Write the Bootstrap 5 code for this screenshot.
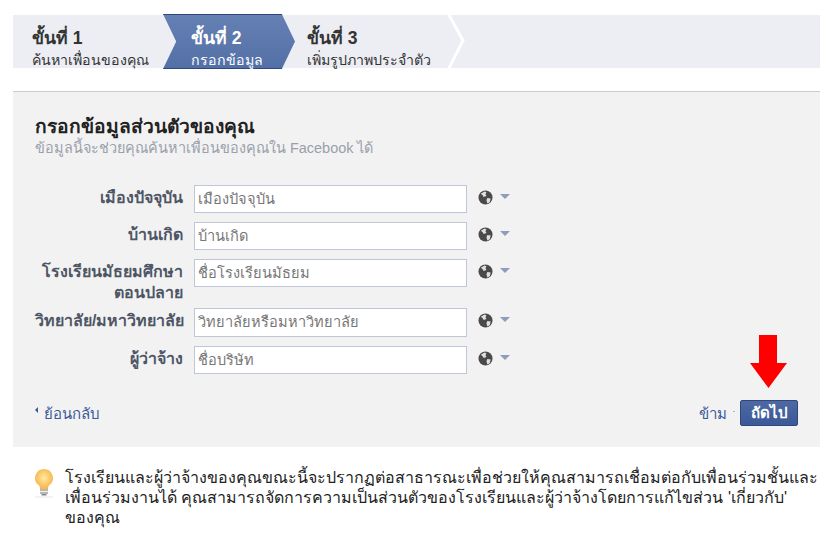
<!DOCTYPE html>
<html lang="th"><head><meta charset="utf-8">
<link href="https://cdn.jsdelivr.net/npm/bootstrap@5.3.0/dist/css/bootstrap.min.css" rel="stylesheet">
<style>
body{background:#fff;font-family:"Liberation Sans",Tahoma,sans-serif;font-size:14px;color:#333;width:835px;height:536px;overflow:hidden}
.wrap{margin:0 15px 0 13px;padding-top:15px}
.steps{height:53px;background:#eceef4}
.stp{height:53px;line-height:1}
.s-title{font-size:17.5px;font-weight:700;color:#333;line-height:20px;margin-top:13px}
.s-sub{font-size:14.2px;color:#333;line-height:20px;margin-top:2px;white-space:nowrap}
.s1{width:150px;padding-left:19px}
.s2{width:132px;height:55px;margin-top:-1px;background:linear-gradient(#6580b3,#5370a6);padding-left:28px;clip-path:polygon(0 0,90% 0,100% 50%,90% 100%,0 100%,10% 50%);box-shadow:inset 0 1px 0 #2f477a,inset 0 -1px 0 #2f477a}
.s2 .s-title{margin-top:14px;color:#fff}
.s2 .s-sub{color:#fff}
.s3{width:153px;padding-left:12px}
.s-end{display:block;flex:none}
.panel{margin-top:23px;background:#f2f2f2;border-top:1px solid #ccc;height:356px;padding:24px 22px 0}
.p-head{font-size:19.2px;font-weight:700;color:#222;line-height:22px}
.p-sub{font-size:14.45px;color:#9aa0ac;line-height:20px;margin-bottom:27px}
.f-row{display:flex;margin-bottom:9px}
.f-row.tall{margin-bottom:5px}
.f-row.big .f-in{height:29px}
.f-lab{width:148px;text-align:right;font-weight:700;color:#4e5665;font-size:16px;line-height:21px;padding-top:2px;flex:none;white-space:nowrap}
.f-in{margin-left:11px;width:273px;height:28px;border:1px solid #bdc7d8;background:#fff;padding:0 3px;font-size:14.6px;color:#777;line-height:26px;flex:none;border-radius:0}
.f-pr{margin-left:11px;display:flex;align-items:flex-start;gap:7px;padding-top:5px}
.tri{width:0;height:0;border:5.5px solid transparent;border-top:5px solid #8d9dbd;border-bottom:0;margin-top:4px}
.foot{margin-top:26px;height:32px}
.lnk{color:#3b5998;text-decoration:none;font-size:15px;padding-top:3px}
.bk{display:inline-block;width:0;height:0;border:3px solid transparent;border-right:3px solid #3b5998;border-left:0;vertical-align:6px;margin-right:6px}
.tick{width:2px;height:1px;background:#b5b5b5;margin:11px 5px 0 6px}
.nx{background:linear-gradient(#4e69a2,#3b5998);border:1px solid #2f477a;border-radius:2px;color:#fff;font-weight:700;font-size:15px;line-height:24px;width:58px;height:26px;text-align:center}
.arr{position:absolute;left:750px;top:335px}
.tip{margin:21px 0 0 21px;font-size:16px;color:#222;line-height:20px}
.tip svg{flex:none}
.tip-t{margin-left:11px}
</style></head><body>
<div class="wrap">
<div class="steps d-flex">
<div class="stp s1"><div class="s-title">ขั้นที่ 1</div><div class="s-sub">ค้นหาเพื่อนของคุณ</div></div>
<div class="stp s2"><div class="s-title">ขั้นที่ 2</div><div class="s-sub">กรอกข้อมูล</div></div>
<div class="stp s3"><div class="s-title">ขั้นที่ 3</div><div class="s-sub">เพิ่มรูปภาพประจำตัว</div></div>
<svg class="s-end" width="18" height="53" viewBox="0 0 18 53"><path d="M1 0L15 25.500 1 53" fill="none" stroke="#fff" stroke-width="3"/></svg>
</div>
<div class="panel">
<div class="p-head">กรอกข้อมูลส่วนตัวของคุณ</div>
<div class="p-sub">ข้อมูลนี้จะช่วยคุณค้นหาเพื่อนของคุณใน Facebook ได้</div>
<div class="f-row"><div class="f-lab">เมืองปัจจุบัน</div><div class="f-in">เมืองปัจจุบัน</div><div class="f-pr"><svg width="15" height="15" viewBox="0 0 16 16"><circle cx="8" cy="8" r="7.500" fill="#4a4a4a"/><path d="M3 4l4-2.500 2 1-1 2 1 2-3 1-1-2zM10 8.500l3.500.5-1 4-2.500 1.500-1-3.500z" fill="#e0e0e0"/></svg><span class="tri"></span></div></div>
<div class="f-row"><div class="f-lab">บ้านเกิด</div><div class="f-in">บ้านเกิด</div><div class="f-pr"><svg width="15" height="15" viewBox="0 0 16 16"><circle cx="8" cy="8" r="7.500" fill="#4a4a4a"/><path d="M3 4l4-2.500 2 1-1 2 1 2-3 1-1-2zM10 8.500l3.500.5-1 4-2.500 1.500-1-3.500z" fill="#e0e0e0"/></svg><span class="tri"></span></div></div>
<div class="f-row tall"><div class="f-lab">โรงเรียนมัธยมศึกษา<br>ตอนปลาย</div><div class="f-in">ชื่อโรงเรียนมัธยม</div><div class="f-pr"><svg width="15" height="15" viewBox="0 0 16 16"><circle cx="8" cy="8" r="7.500" fill="#4a4a4a"/><path d="M3 4l4-2.500 2 1-1 2 1 2-3 1-1-2zM10 8.500l3.500.5-1 4-2.500 1.500-1-3.500z" fill="#e0e0e0"/></svg><span class="tri"></span></div></div>
<div class="f-row big"><div class="f-lab">วิทยาลัย/มหาวิทยาลัย</div><div class="f-in">วิทยาลัยหรือมหาวิทยาลัย</div><div class="f-pr"><svg width="15" height="15" viewBox="0 0 16 16"><circle cx="8" cy="8" r="7.500" fill="#4a4a4a"/><path d="M3 4l4-2.500 2 1-1 2 1 2-3 1-1-2zM10 8.500l3.500.5-1 4-2.500 1.500-1-3.500z" fill="#e0e0e0"/></svg><span class="tri"></span></div></div>
<div class="f-row"><div class="f-lab">ผู้ว่าจ้าง</div><div class="f-in">ชื่อบริษัท</div><div class="f-pr"><svg width="15" height="15" viewBox="0 0 16 16"><circle cx="8" cy="8" r="7.500" fill="#4a4a4a"/><path d="M3 4l4-2.500 2 1-1 2 1 2-3 1-1-2zM10 8.500l3.500.5-1 4-2.500 1.500-1-3.500z" fill="#e0e0e0"/></svg><span class="tri"></span></div></div>
<div class="foot d-flex justify-content-between align-items-start"><a class="lnk" href="#"><span class="bk"></span>ย้อนกลับ</a><div class="d-flex align-items-start"><a class="lnk" href="#">ข้าม</a><span class="tick"></span><div class="nx">ถัดไป</div></div></div>
</div>
<div class="tip d-flex"><svg width="20" height="30" viewBox="0 0 20 30"><defs><radialGradient id="b" cx=".5" cy=".45" r=".55"><stop offset="0" stop-color="#ffe9a0"/><stop offset="1" stop-color="#f7b44a"/></radialGradient></defs><path d="M10 1a9 9 0 0 0-5.500 16c1.200 1 1.500 2.500 1.500 4h8c0-1.500.3-3 1.500-4A9 9 0 0 0 10 1z" fill="url(#b)"/><rect x="6" y="21" width="8" height="5" fill="#b8b8b8"/><rect x="6" y="23" width="8" height="1" fill="#eee"/><rect x="7.500" y="26" width="5" height="1.500" fill="#888"/><rect x="1" y="28.500" width="18" height="1" fill="#e8e8e8"/></svg><div class="tip-t">โรงเรียนและผู้ว่าจ้างของคุณขณะนี้จะปรากฏต่อสาธารณะเพื่อช่วยให้คุณสามารถเชื่อมต่อกับเพื่อนร่วมชั้นและเพื่อนร่วมงานได้ คุณสามารถจัดการความเป็นส่วนตัวของโรงเรียนและผู้ว่าจ้างโดยการแก้ไขส่วน 'เกี่ยวกับ' ของคุณ</div></div>
</div>
<svg class="arr" width="37" height="53" viewBox="0 0 37 53"><path d="M9 0h18v28h10L18.500 53 0 28h9z" fill="#f00"/></svg>
</body></html>
